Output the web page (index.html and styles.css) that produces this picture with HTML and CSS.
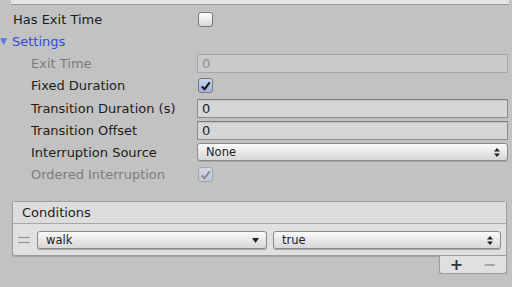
FILE: index.html
```html
<!DOCTYPE html>
<html lang="en">
<head>
  <meta charset="UTF-8">
  <title>Transition Inspector</title>
  <link rel="stylesheet" href="styles.css">
</head>
<body>
  <div class="top-strip"></div>

  <div class="row h22">
    <span class="label">Has Exit Time</span>
    <span class="checkbox"></span>
  </div>

  <div class="row h22 foldout">
    <span class="arrow">&#9660;</span><span>Settings</span>
  </div>

  <div class="row h22 indent disabled">
    <span class="label">Exit Time</span>
    <div class="field">0</div>
  </div>

  <div class="row h23 indent">
    <span class="label">Fixed Duration</span>
    <span class="checkbox checked">
      <svg width="14" height="14" viewBox="0 0 14 14"><path d="M3 7.5 L6 10.5 L11.5 3" fill="none" stroke="#111" stroke-width="2.2"/></svg>
    </span>
  </div>

  <div class="row h22 indent">
    <span class="label">Transition Duration (s)</span>
    <div class="field">0</div>
  </div>

  <div class="row h22 indent">
    <span class="label">Transition Offset</span>
    <div class="field">0</div>
  </div>

  <div class="row h22 indent">
    <span class="label">Interruption Source</span>
    <div class="popup">None
      <svg class="updown" width="6" height="9" viewBox="0 0 6 9"><path d="M0 3.5 L3 0 L6 3.5 Z M0 5.5 L3 9 L6 5.5 Z" fill="#222"/></svg>
    </div>
  </div>

  <div class="row h23 indent disabled">
    <span class="label">Ordered Interruption</span>
    <span class="checkbox checked">
      <svg width="14" height="14" viewBox="0 0 14 14"><path d="M3 7.5 L6 10.5 L11.5 3" fill="none" stroke="#8a8a8a" stroke-width="2.2"/></svg>
    </span>
  </div>

  <div class="conditions">
    <div class="cond-header">Conditions</div>
    <div class="cond-body">
      <span class="handle"></span>
      <div class="popup walk">walk
        <svg class="down" width="7" height="5" viewBox="0 0 7 5"><path d="M0 0 L7 0 L3.5 5 Z" fill="#222"/></svg>
      </div>
      <div class="popup value">true
        <svg class="updown" width="6" height="9" viewBox="0 0 6 9"><path d="M0 3.5 L3 0 L6 3.5 Z M0 5.5 L3 9 L6 5.5 Z" fill="#222"/></svg>
      </div>
    </div>
  </div>
  <div class="cond-footer">
    <span class="plus">+</span>
    <span class="minus">&minus;</span>
  </div>
</body>
</html>
```

FILE: styles.css
```css
body {
  margin: 0;
  background-color: #c2c2c2;
  font-family: 'DejaVu Sans', 'Lucida Grande', sans-serif;
  font-size: 13px;
  color: #1c1c1c;
}

.top-strip {
  height: 4px;
  margin: 0 3px 3px 11px;
  background-color: #e4e4e4;
  border-bottom: 1px solid #9a9a9a;
}

.row {
  display: grid;
  grid-template-columns: 184px 1fr;
  align-items: center;
  padding: 0 4px 0 13px;
}

.h22 { height: 22px; }
.h23 { height: 23px; }

.indent .label {
  padding-left: 18px;
}

.disabled {
  color: #7c7c7c;
}

.foldout {
  display: flex;
  padding-left: 0;
  color: #2e4fd6;
}

.foldout .arrow {
  font-size: 9px;
  color: #5a79e0;
  width: 12px;
}

.checkbox {
  width: 13px;
  height: 13px;
  margin-left: 1px;
  border: 1px solid #7a7a7a;
  border-radius: 3px;
  background: linear-gradient(#ffffff, #d8d8d8);
  display: flex;
  align-items: center;
  justify-content: center;
}

.checkbox.checked {
  background: linear-gradient(#c8d6f0, #9fb4de);
}

.disabled .checkbox {
  border-color: #a4a4a4;
  background: linear-gradient(#d2d8e4, #bfc6d4);
}

.field {
  height: 17px;
  line-height: 17px;
  padding-left: 4px;
  background-color: #d6d6d6;
  border: 1px solid #8c8c8c;
  border-top-color: #7c7c7c;
  box-shadow: inset 0 1px 0 #c4c4c4;
}

.disabled .field {
  background-color: #cacaca;
  border-color: #a6a6a6;
  color: #8e8e8e;
  box-shadow: none;
}

.popup {
  position: relative;
  height: 16px;
  line-height: 16px;
  padding-left: 8px;
  font-size: 11.5px;
  background: linear-gradient(#fbfbfb, #e4e4e4 60%, #d8d8d8);
  border: 1px solid #8a8a8a;
  border-radius: 3px;
  box-shadow: 0 1px 0 #a8a8a8;
}

.popup svg {
  position: absolute;
  right: 7px;
}

.popup .updown {
  top: 4px;
}

.popup .down {
  top: 6px;
}

.conditions {
  margin: 15px 5px 0 12px;
  border: 1px solid #9c9c9c;
  border-radius: 3px 3px 0 3px;
  background-color: #e0e0e0;
  box-shadow: 0 1px 1px #a0a0a0;
}

.cond-header {
  height: 21px;
  line-height: 21px;
  padding-left: 9px;
  background-color: #dddddd;
  border-bottom: 1px solid #a8a8a8;
}

.cond-body {
  display: flex;
  align-items: center;
  gap: 6px;
  height: 31px;
  padding: 0 5px 0 5px;
}

.handle {
  width: 12px;
  height: 4px;
  border-top: 1px solid #8c8c8c;
  border-bottom: 1px solid #8c8c8c;
  margin-right: 1px;
}

.cond-body .walk {
  width: 220px;
}

.cond-body .value {
  flex: 1;
}

.cond-footer {
  width: 66px;
  height: 17px;
  margin: 0 5px 0 auto;
  display: flex;
  justify-content: space-around;
  align-items: center;
  background-color: #e0e0e0;
  border: 1px solid #9c9c9c;
  border-top: none;
  border-radius: 0 0 3px 3px;
  box-shadow: 0 1px 1px #a0a0a0;
  font-size: 16px;
  font-weight: bold;
}

.plus {
  color: #333333;
}

.minus {
  color: #a8a8a8;
}
```
